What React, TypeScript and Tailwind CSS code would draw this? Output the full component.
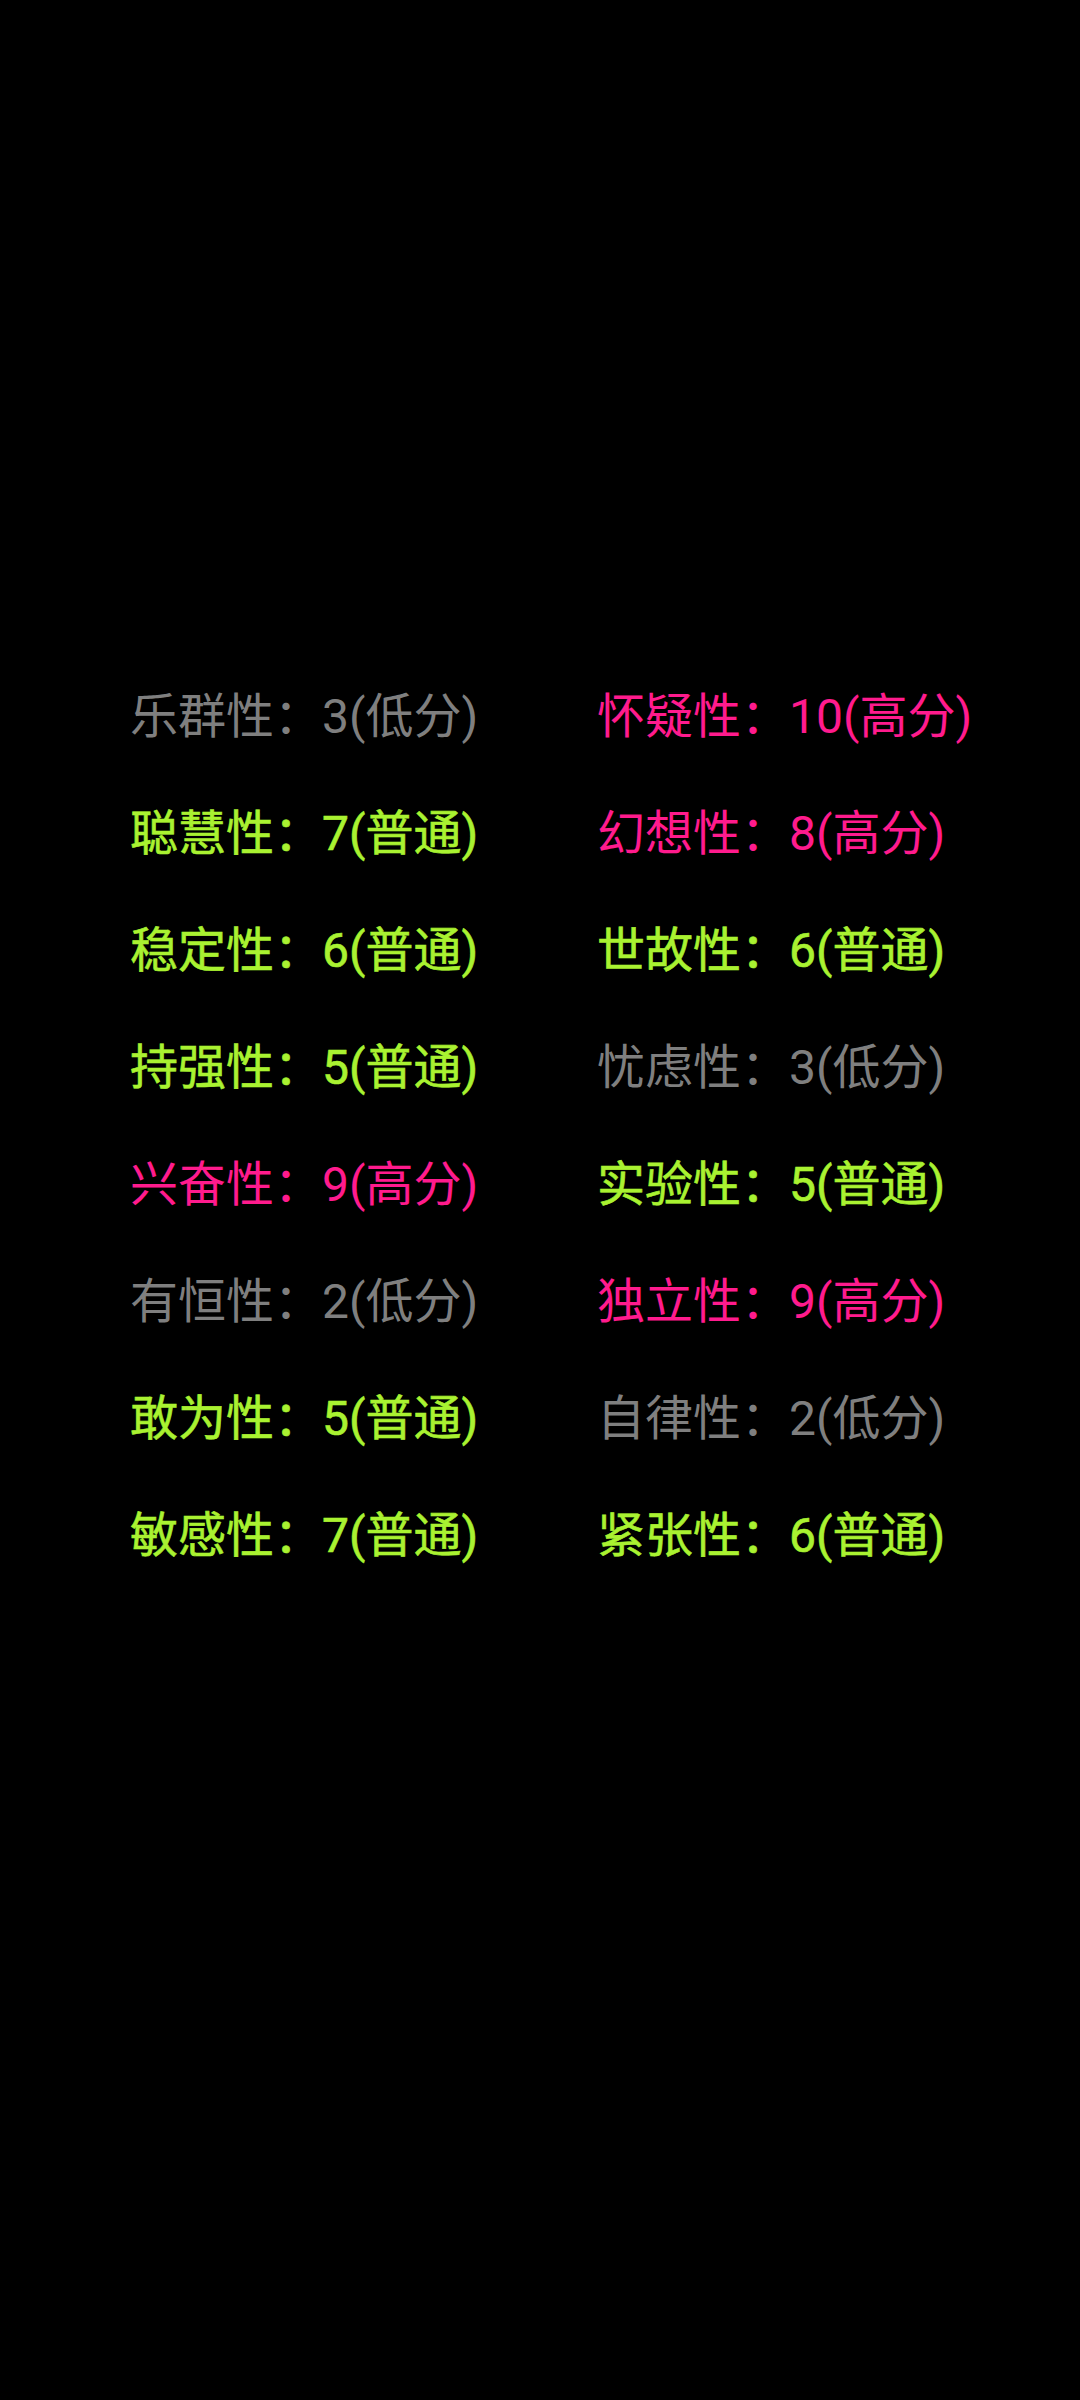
const GRAY = "text-[#7f7f7f]";
const PINK = "text-[#ff1b8d]";
const GREEN = "text-[#a9f231] [-webkit-text-stroke:0.6px_#a9f231]";

type Trait = { name: string; score: number; level: "低分" | "普通" | "高分" };

const left: Trait[] = [
  { name: "乐群性", score: 3, level: "低分" },
  { name: "聪慧性", score: 7, level: "普通" },
  { name: "稳定性", score: 6, level: "普通" },
  { name: "持强性", score: 5, level: "普通" },
  { name: "兴奋性", score: 9, level: "高分" },
  { name: "有恒性", score: 2, level: "低分" },
  { name: "敢为性", score: 5, level: "普通" },
  { name: "敏感性", score: 7, level: "普通" },
];

const right: Trait[] = [
  { name: "怀疑性", score: 10, level: "高分" },
  { name: "幻想性", score: 8, level: "高分" },
  { name: "世故性", score: 6, level: "普通" },
  { name: "忧虑性", score: 3, level: "低分" },
  { name: "实验性", score: 5, level: "普通" },
  { name: "独立性", score: 9, level: "高分" },
  { name: "自律性", score: 2, level: "低分" },
  { name: "紧张性", score: 6, level: "普通" },
];

function colorFor(level: Trait["level"]) {
  if (level === "低分") return GRAY;
  if (level === "高分") return PINK;
  return GREEN;
}

function TraitText({ t }: { t: Trait }) {
  return (
    <div className={`h-[117px] leading-[117px] whitespace-nowrap ${colorFor(t.level)}`}>
      {t.name}：{t.score}({t.level})
    </div>
  );
}

export default function App() {
  return (
    <div
      className="w-[1080px] h-[2400px] bg-black pt-[658px] pl-[130px] text-[48px]"
      style={{ fontFamily: '"Roboto", "Noto Sans CJK SC", sans-serif' }}
    >
      <div className="grid grid-cols-[467px_auto]">
        {left.map((t, i) => (
          <div key={t.name} className="contents">
            <TraitText t={t} />
            <TraitText t={right[i]} />
          </div>
        ))}
      </div>
    </div>
  );
}
